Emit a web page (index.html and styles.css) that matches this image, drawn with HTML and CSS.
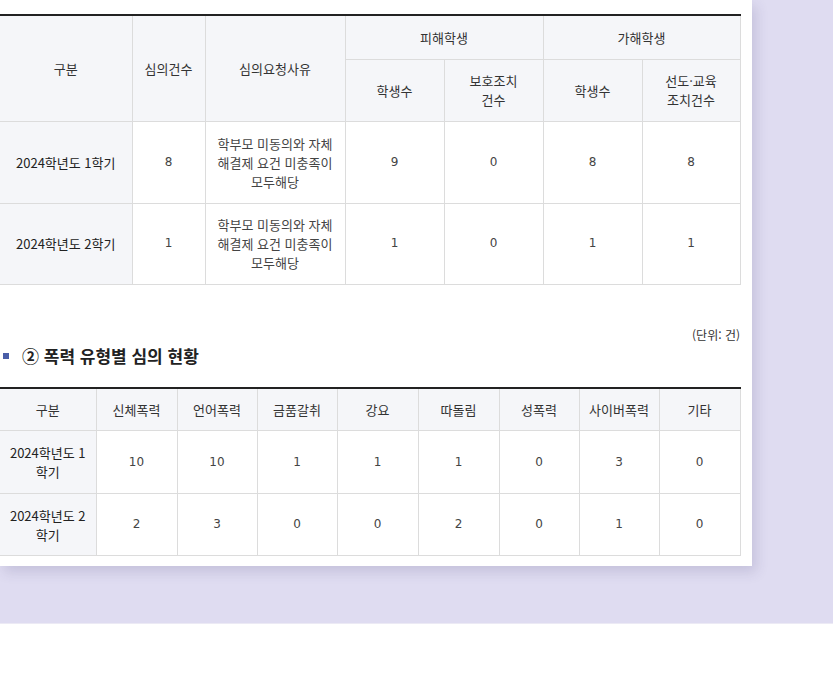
FILE: index.html
```html
<!DOCTYPE html>
<html lang="ko">
<head>
<meta charset="utf-8">
<link rel="stylesheet" href="styles.css">
</head>
<body>
<div class="stage">
  <div class="card">
    <table class="tbl tbl1">
      <colgroup>
        <col style="width:132px"><col style="width:73px"><col style="width:140px"><col style="width:99px"><col style="width:99px"><col style="width:99px"><col style="width:98px">
      </colgroup>
      <thead>
        <tr class="h1">
          <th rowspan="2">구분</th>
          <th rowspan="2">심의건수</th>
          <th rowspan="2">심의요청사유</th>
          <th colspan="2">피해학생</th>
          <th colspan="2">가해학생</th>
        </tr>
        <tr class="h2">
          <th>학생수</th>
          <th>보호조치<br>건수</th>
          <th>학생수</th>
          <th>선도·교육<br>조치건수</th>
        </tr>
      </thead>
      <tbody>
        <tr class="d1">
          <th class="rowh">2024학년도 1학기</th>
          <td>8</td>
          <td class="txt">학부모 미동의와 자체<br>해결제 요건 미충족이<br>모두해당</td>
          <td>9</td>
          <td>0</td>
          <td>8</td>
          <td>8</td>
        </tr>
        <tr class="d2">
          <th class="rowh">2024학년도 2학기</th>
          <td>1</td>
          <td class="txt">학부모 미동의와 자체<br>해결제 요건 미충족이<br>모두해당</td>
          <td>1</td>
          <td>0</td>
          <td>1</td>
          <td>1</td>
        </tr>
      </tbody>
    </table>

    <p class="unit">(단위: 건)</p>
    <h3 class="sub-title">② 폭력 유형별 심의 현황</h3>

    <table class="tbl tbl2">
      <colgroup>
        <col style="width:96px"><col style="width:81px"><col style="width:80px"><col style="width:80px"><col style="width:81px"><col style="width:81px"><col style="width:80px"><col style="width:80px"><col style="width:81px">
      </colgroup>
      <thead>
        <tr class="h1">
          <th>구분</th>
          <th>신체폭력</th>
          <th>언어폭력</th>
          <th>금품갈취</th>
          <th>강요</th>
          <th>따돌림</th>
          <th>성폭력</th>
          <th>사이버폭력</th>
          <th>기타</th>
        </tr>
      </thead>
      <tbody>
        <tr class="d1">
          <th class="rowh">2024학년도 1<br>학기</th>
          <td>10</td><td>10</td><td>1</td><td>1</td><td>1</td><td>0</td><td>3</td><td>0</td>
        </tr>
        <tr class="d2">
          <th class="rowh">2024학년도 2<br>학기</th>
          <td>2</td><td>3</td><td>0</td><td>0</td><td>2</td><td>0</td><td>1</td><td>0</td>
        </tr>
      </tbody>
    </table>
  </div>
</div>
</body>
</html>
```

FILE: styles.css
```css
* { box-sizing: border-box; }
html, body { margin: 0; padding: 0; background: #ffffff; }
body {
  font-family: "Noto Sans CJK KR", "Noto Sans", sans-serif;
  color: #333;
  width: 833px;
  overflow: hidden;
}
.stage {
  background: #dfdcf1;
  height: 624px;
  border-bottom: 1px solid #eceaf5;
}
.card {
  width: 752px;
  height: 566px;
  background: #fff;
  padding: 14px 12px 0 0;
  box-shadow: 4px 6px 12px rgba(60, 55, 110, 0.16);
}
.tbl {
  width: 740px;
  border-collapse: collapse;
  table-layout: fixed;
  border-top: 2px solid #222;
  font-size: 13px;
  line-height: 19px;
}
.tbl th, .tbl td {
  border: 1px solid #dcdcdc;
  padding: 9px 4px;
  text-align: center;
  vertical-align: middle;
}
.tbl tr:first-child th { border-top: 0; }
.tbl th:first-child, .tbl td:first-child { border-left: 0; }
.tbl th {
  background: #f5f6f9;
  font-weight: 400;
  color: #333;
}
.tbl th.rowh { color: #222; }
.tbl td {
  background: #fff;
  font-family: "DejaVu Sans", "Noto Sans CJK KR", sans-serif;
  font-size: 12px;
  color: #444;
}
.tbl td.txt {
  font-family: "Noto Sans CJK KR", sans-serif;
  font-size: 13px;
  color: #444;
}
.tbl1 .h1 { height: 44px; }
.tbl1 .h2 { height: 62px; }
.tbl1 .d1 { height: 82px; }
.tbl1 .d2 { height: 81px; }
.unit {
  margin: 41px 0 0;
  width: 740px;
  text-align: right;
  font-size: 12px;
  line-height: 18px;
  color: #333;
}
.sub-title {
  margin: 0 0 19px;
  font-size: 17px;
  line-height: 24px;
  font-weight: 700;
  color: #222;
  display: flex;
  align-items: center;
  gap: 13px;
  padding-left: 3px;
}
.sub-title::before {
  content: "";
  width: 6px;
  height: 6px;
  background: #4a5ea8;
  flex: none;
}
.tbl2 .h1 { height: 43px; }
.tbl2 .d1 { height: 63px; }
.tbl2 .d2 { height: 62px; }
```
